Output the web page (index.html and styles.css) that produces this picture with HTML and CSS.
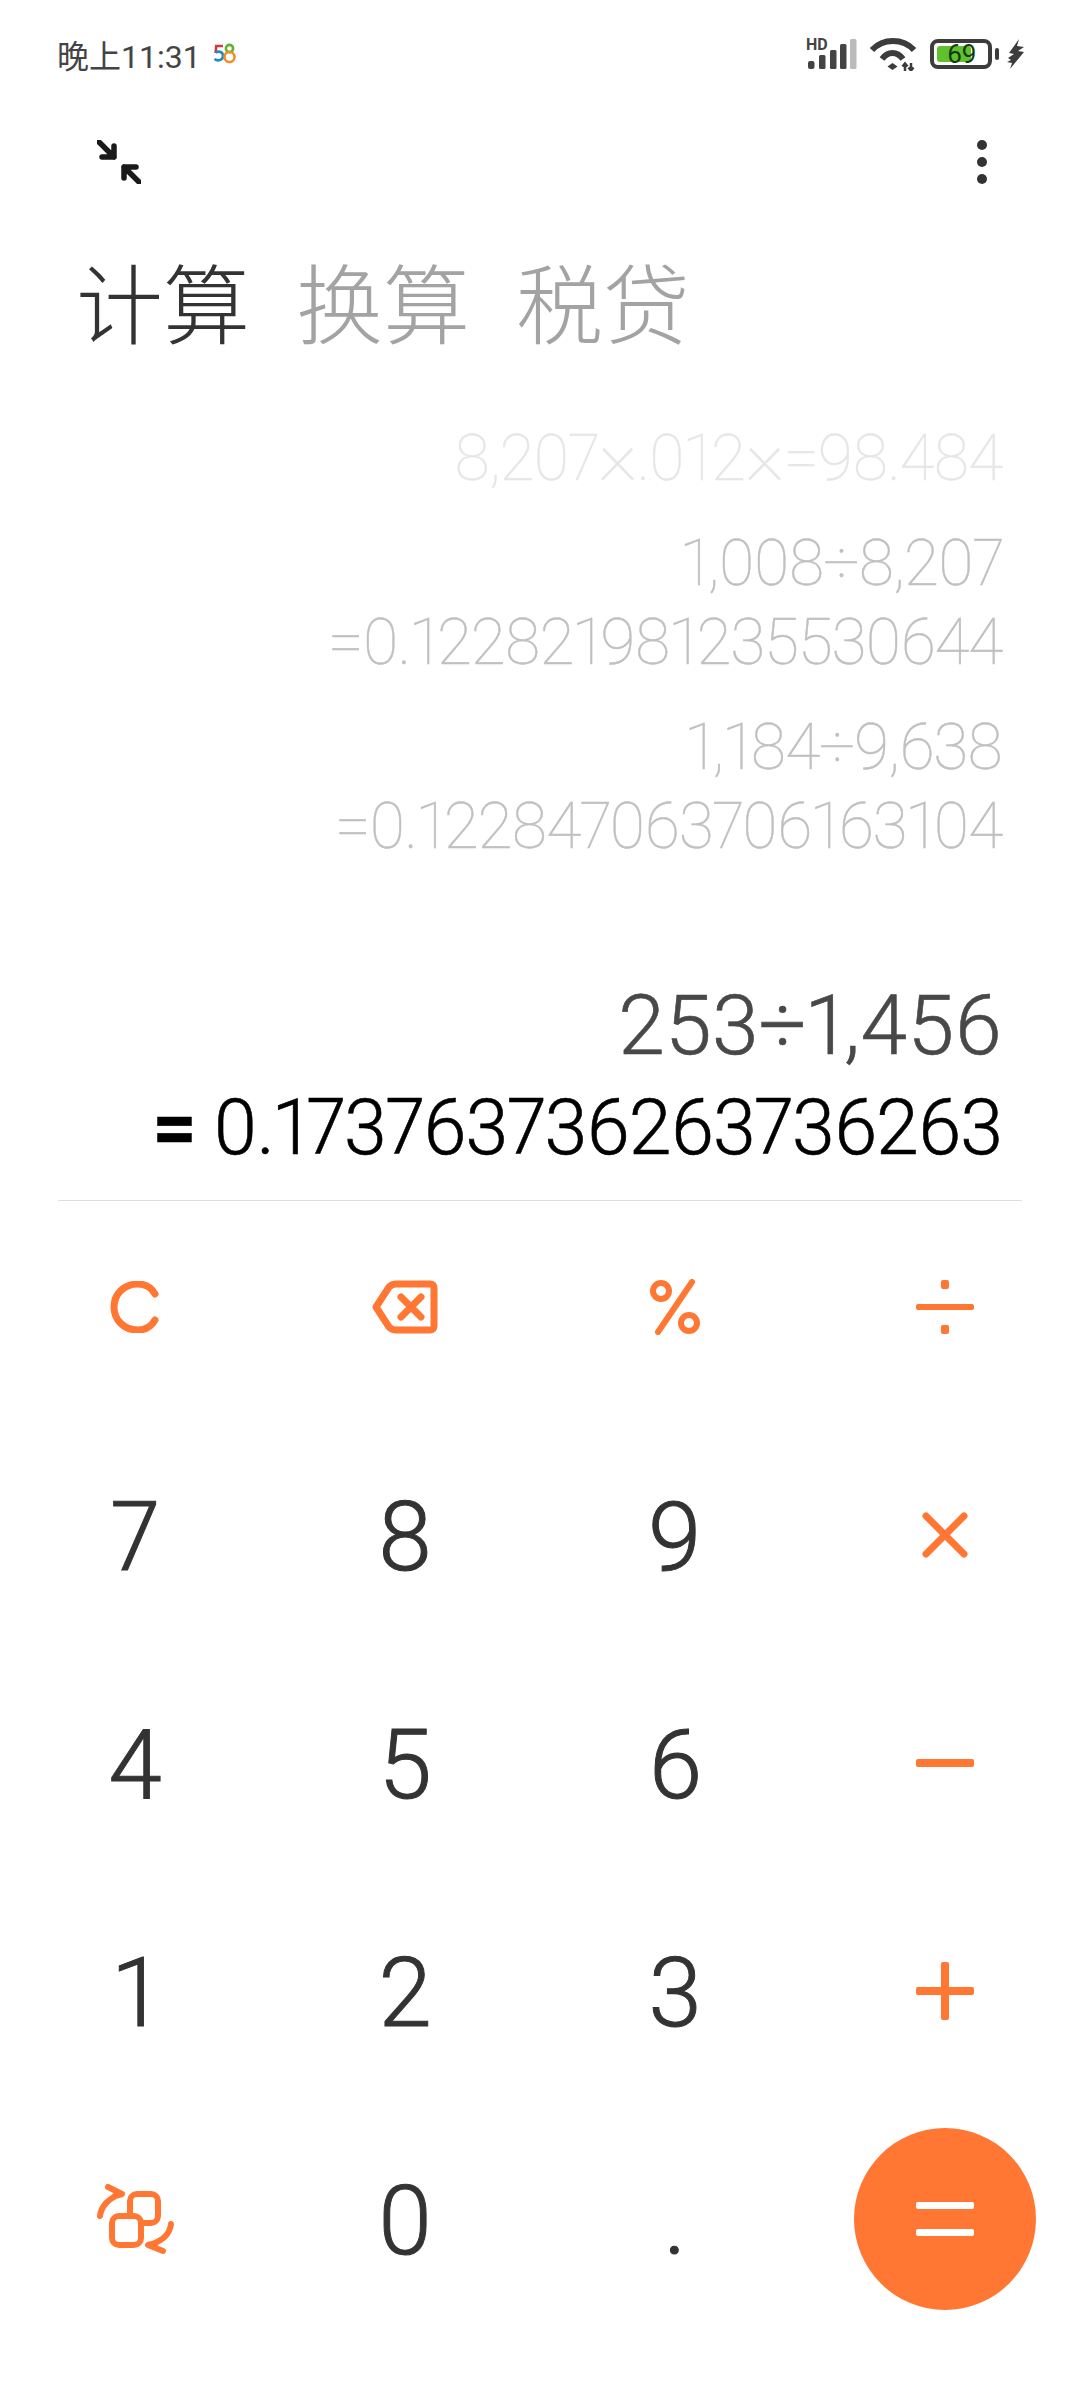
FILE: index.html
```html
<!DOCTYPE html>
<html lang="zh">
<head>
    <meta charset="UTF-8">
    <meta name="viewport" content="width=device-width, initial-scale=1.0">
    <title>计算器</title>
    <link rel="stylesheet" href="styles.css">
</head>
<body>
    <header class="status-bar">
        <div class="status-left">
            <span class="clock">晚上11:31</span>
            <svg class="logo-58" width="24" height="22" viewBox="0 0 24 22" fill="none" stroke-width="2.6">
                <path d="M10 3H3.2L2.6 10" stroke="#d9363e"/>
                <path d="M2.6 9.5C6 7.5 10 9 10 13C10 17.5 4.5 18.5 1.5 16" stroke="#2189c6"/>
                <circle cx="16.5" cy="5.5" r="3.6" stroke="#5cb531"/>
                <circle cx="16.5" cy="14" r="5" stroke="#ef8f27"/>
            </svg>
        </div>
        <div class="status-right">
            <svg width="51" height="40" viewBox="0 -4 51 40">
                <text x="0" y="11.500" class="hd-text">HD</text>
                <rect x="2" y="23" width="6.500" height="8" rx="2" fill="#444"/>
                <rect x="13" y="17" width="6.500" height="14" rx="1.500" fill="#444"/>
                <rect x="24" y="12" width="6.500" height="19" rx="1.500" fill="#444"/>
                <rect x="34" y="6" width="6.500" height="25" rx="1.500" fill="#444"/>
                <rect x="44" y="1" width="6.500" height="30" rx="1.500" fill="#bbb"/>
            </svg>
            <svg class="wifi" width="46" height="34" viewBox="0 0 46 34" fill="none" stroke="#3c3c3c" stroke-width="6">
                <path d="M2 13C13 1 33 1 44 13"/>
                <path d="M12 22C18 14 27 14 33 22"/>
                <path d="M17.500 29.500L22.500 26L27.500 29.500L22.500 33Z" fill="#3c3c3c" stroke="none"/>
                <path d="M35 34V27M32.500 29.500L35 26.500L37.500 29.500M41 26V33M38.500 30.500L41 33.500L43.500 30.500" stroke-width="2.500"/>
            </svg>
            <div class="battery">
                <div class="battery-fill"></div>
                <span class="battery-num">69</span>
            </div>
            <div class="battery-tip"></div>
            <svg class="bolt" width="18" height="30" viewBox="0 0 18 30">
                <path d="M12 0L2 14L7 15L1 19L4 21L0 23L5 24L3 30L17 13L11 12L17 8L10 7Z" fill="#3c3c3c"/>
            </svg>
        </div>
    </header>

    <div class="toolbar">
        <svg width="44" height="44" viewBox="0 0 44 44" fill="none" stroke="#1a1a1a" stroke-width="5.500" stroke-linecap="round" stroke-linejoin="round">
            <path d="M2 2L17 17M17 6V17H5"/>
            <path d="M42 42L27 27M27 38V27H39"/>
        </svg>
        <div class="more">
            <span class="dot"></span>
            <span class="dot"></span>
            <span class="dot"></span>
        </div>
    </div>

    <nav class="tabs">
        <span class="tab active">计算</span>
        <span class="tab">换算</span>
        <span class="tab">税贷</span>
    </nav>

    <section class="history">
        <div class="hist-item faded">8,207<span class="mul">×</span>.012<span class="mul">×</span>=98.484</div>
        <div class="hist-item">1,008÷8,207<br>=0.122821981235530644</div>
        <div class="hist-item">1,184÷9,638<br>=0.122847063706163104</div>
    </section>

    <section class="display">
        <div class="expr">253÷1,456</div>
        <div class="result"><span class="eq">=</span> 0.173763736263736263</div>
    </section>

    <div class="divider"></div>

    <main class="keypad">
        <div class="key">
            <svg width="50" height="52" viewBox="0 0 50 52" fill="none" class="op" stroke-width="7" stroke-linecap="round">
                <path d="M45 13C41 6 35 3 28 3C14 3 4 13 4 26C4 39 14 49 28 49C35 49 41 46 45 39"/>
            </svg>
        </div>
        <div class="key">
            <svg width="66" height="54" viewBox="0 0 66 54" fill="none" class="op" stroke-width="7" stroke-linecap="round" stroke-linejoin="round">
                <path d="M24 4H58C60.500 4 62 5.500 62 8V46C62 48.500 60.500 50 58 50H24C21 50 19 49 17 47L4 27L17 7C19 5 21 4 24 4Z"/>
                <path d="M29 17L49 37M49 17L29 37"/>
            </svg>
        </div>
        <div class="key">
            <svg width="50" height="56" viewBox="0 0 50 56" fill="none" class="op" stroke-width="6" stroke-linecap="round">
                <circle cx="11" cy="12" r="8"/>
                <circle cx="39" cy="44" r="8"/>
                <path d="M42 3L8 53" stroke-width="6"/>
            </svg>
        </div>
        <div class="key">
            <svg width="60" height="54" viewBox="0 0 60 54" class="op-fill">
                <rect x="1" y="24" width="58" height="6" rx="2"/>
                <rect x="26" y="0" width="8" height="9" rx="2"/>
                <rect x="26" y="45" width="8" height="9" rx="2"/>
            </svg>
        </div>

        <div class="key digit">7</div>
        <div class="key digit">8</div>
        <div class="key digit">9</div>
        <div class="key">
            <svg width="46" height="46" viewBox="0 0 46 46" fill="none" class="op" stroke-width="7" stroke-linecap="round">
                <path d="M4 4L42 42M42 4L4 42"/>
            </svg>
        </div>

        <div class="key digit">4</div>
        <div class="key digit">5</div>
        <div class="key digit">6</div>
        <div class="key">
            <svg width="58" height="8" viewBox="0 0 58 8" class="op-fill">
                <rect x="0" y="0" width="58" height="8" rx="2"/>
            </svg>
        </div>

        <div class="key digit">1</div>
        <div class="key digit">2</div>
        <div class="key digit">3</div>
        <div class="key">
            <svg width="58" height="58" viewBox="0 0 58 58" class="op-fill">
                <rect x="0" y="25" width="58" height="8" rx="2"/>
                <rect x="25" y="0" width="8" height="58" rx="2"/>
            </svg>
        </div>

        <div class="key">
            <svg width="78" height="76" viewBox="0 0 78 76" fill="none" class="op" stroke-width="6" stroke-linecap="round" stroke-linejoin="round">
                <rect x="34" y="13" width="28" height="29" rx="7"/>
                <rect x="16" y="35" width="29" height="29" rx="7" fill="#fff"/>
                <path d="M4 35C5 26 12 17 25 13M12 6L26 13L19 15"/>
                <path d="M75 43C74 52 67 60 53 64M67 70L52 64L60 62"/>
            </svg>
        </div>
        <div class="key digit">0</div>
        <div class="key digit">.</div>
        <div class="key">
            <div class="equals">
                <svg width="58" height="34" viewBox="0 0 58 34" fill="#fff">
                    <rect x="0" y="0" width="58" height="7" rx="2"/>
                    <rect x="0" y="27" width="58" height="7" rx="2"/>
                </svg>
            </div>
        </div>
    </main>
</body>
</html>
```

FILE: styles.css
```css
body {
    margin: 0;
    width: 1080px;
    height: 2400px;
    overflow: hidden;
    background-color: #fff;
    font-family: Roboto, "Noto Sans CJK SC", sans-serif;
    font-variant-numeric: proportional-nums;
}
.status-bar {
    display: flex;
    justify-content: space-between;
    align-items: center;
    height: 56px;
    padding: 26px 55px 0 57px;
    color: #444;
}
.status-left, .status-right {
    display: flex;
    align-items: center;
}
.clock {
    font-size: 32px;
    font-variant-numeric: tabular-nums;
}
.logo-58 {
    margin-left: 12px;
}
.hd-text {
    font-size: 16px;
    font-weight: 700;
    fill: #444;
}
.wifi {
    margin-left: 13px;
}
.battery {
    position: relative;
    width: 54px;
    height: 22px;
    margin-left: 14px;
    border: 4px solid #3c3c3c;
    border-radius: 8px;
}
.battery-fill {
    width: 34px;
    height: 16px;
    margin: 3px;
    background-color: #5fc12e;
    border-radius: 3px;
}
.battery-num {
    position: absolute;
    left: 13px;
    top: -4px;
    font-size: 26px;
    line-height: 30px;
    color: #123a0c;
}
.battery-tip {
    width: 4px;
    height: 12px;
    margin-left: 3px;
    background-color: #3c3c3c;
    border-radius: 2px;
}
.bolt {
    margin-left: 8px;
}
.toolbar {
    display: flex;
    justify-content: space-between;
    align-items: center;
    height: 60px;
    margin-top: 50px;
    padding: 0 93px 0 97px;
}
.more {
    display: flex;
    flex-direction: column;
    gap: 7px;
}
.dot {
    width: 10px;
    height: 10px;
    background-color: #333;
    border-radius: 50%;
}
.tabs {
    display: flex;
    gap: 46px;
    margin-top: 52px;
    padding-left: 76px;
    font-family: "Noto Sans CJK SC", sans-serif;
    font-size: 87px;
    font-weight: 300;
    line-height: 112px;
}
.tab {
    color: #a3a3a3;
}
.tab.active {
    color: #333;
}
.history {
    margin-top: 63px;
    padding-right: 78px;
    text-align: right;
    font-size: 64px;
    font-weight: 100;
    -webkit-text-stroke: 0.4px;
    letter-spacing: -1.300px;
    line-height: 79px;
    color: #c0c0c0;
}
.hist-item {
    margin-bottom: 26px;
    height: auto;
}
.hist-item.faded {
    color: #e6e6e6;
}
.mul {
    font-size: 78px;
    line-height: 0;
}
.display {
    margin-top: 110px;
    padding-right: 78px;
    text-align: right;
}
.expr {
    font-size: 84px;
    font-weight: 300;
    -webkit-text-stroke: 0.6px;
    letter-spacing: 0.3px;
    line-height: 100px;
    color: #484848;
}
.result {
    font-size: 77px;
    font-weight: 300;
    -webkit-text-stroke: 0.6px;
    letter-spacing: -1px;
    line-height: 104px;
    color: #000;
}
.eq {
    font-weight: 700;
}
.divider {
    height: 1px;
    margin: 20px 58px -8px;
    background-color: #dedede;
}
.keypad {
    display: grid;
    grid-template-columns: repeat(4, 270px);
    grid-auto-rows: 228px;
}
.key {
    display: flex;
    justify-content: center;
    align-items: center;
}
.digit {
    padding-top: 3px;
    font-size: 96px;
    font-weight: 300;
    -webkit-text-stroke: 1px;
    color: #333;
}
.op {
    stroke: #ff7733;
}
.op-fill {
    fill: #ff7733;
}
.equals {
    display: flex;
    justify-content: center;
    align-items: center;
    width: 182px;
    height: 182px;
    background-color: #ff7733;
    border-radius: 50%;
}
```
